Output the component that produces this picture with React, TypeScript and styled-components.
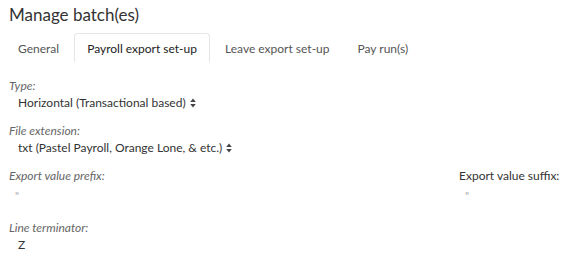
import React from 'react'
import styled, { createGlobalStyle } from 'styled-components'

const GlobalStyle = createGlobalStyle`
  html, body {
    margin: 0;
    padding: 0;
    background: #fff;
  }
  body {
    font-family: Lato, "Open Sans", sans-serif;
    color: #333;
  }
`

const Page = styled.div`
  width: 577px;
  height: 257px;
  padding: 4px 8px 0 9px;
  box-sizing: border-box;
  overflow: hidden;
`

const Title = styled.h1`
  margin: 0;
  font-size: 17px;
  font-weight: 400;
  line-height: 22px;
  color: #333;
`

const Tabs = styled.div`
  display: flex;
  margin: 7px 0 0 -4px;
  height: 29px;
`

const Tab = styled.div<{ $active?: boolean }>`
  padding: 0 12px;
  margin-right: 2px;
  font-size: 12px;
  line-height: 29px;
  color: ${(p) => (p.$active ? '#222' : '#555')};
  background: #fff;
  border: 1px solid ${(p) => (p.$active ? '#e6e6e6' : 'transparent')};
  border-bottom: none;
  border-radius: 4px 4px 0 0;
`

const Form = styled.div`
  padding-top: 16px;
`

const Row = styled.div`
  display: flex;
  justify-content: space-between;
`

const Field = styled.div<{ $w?: number }>`
  margin-bottom: 11px;
  width: ${(p) => (p.$w ? `${p.$w}px` : 'auto')};
`

const Label = styled.div<{ $plain?: boolean }>`
  font-size: 12px;
  line-height: 15px;
  font-style: ${(p) => (p.$plain ? 'normal' : 'italic')};
  color: ${(p) => (p.$plain ? '#333' : '#666')};
`

const Value = styled.div`
  font-size: 12px;
  line-height: 19px;
  padding-left: 9px;
  color: #333;
  display: flex;
  align-items: center;
  gap: 4px;
`

const Empty = styled.div`
  font-size: 11px;
  line-height: 26px;
  padding-left: 6px;
  color: #aaa;
`

const Sort = () => (
  <svg width="6" height="10" viewBox="0 0 6 10">
    <path d="M3 0.5 L5.8 4 H0.2 Z M3 9.5 L5.8 6 H0.2 Z" fill="#444" />
  </svg>
)

export default function App() {
  return (
    <>
      <GlobalStyle />
      <Page>
        <Title>Manage batch(es)</Title>
        <Tabs>
          <Tab>General</Tab>
          <Tab $active>Payroll export set-up</Tab>
          <Tab>Leave export set-up</Tab>
          <Tab>Pay run(s)</Tab>
        </Tabs>
        <Form>
          <Field>
            <Label>Type:</Label>
            <Value>
              Horizontal (Transactional based) <Sort />
            </Value>
          </Field>
          <Field>
            <Label>File extension:</Label>
            <Value>
              txt (Pastel Payroll, Orange Lone, &amp; etc.) <Sort />
            </Value>
          </Field>
          <Row>
            <Field>
              <Label>Export value prefix:</Label>
              <Empty>"</Empty>
            </Field>
            <Field $w={110}>
              <Label $plain>Export value suffix:</Label>
              <Empty>"</Empty>
            </Field>
          </Row>
          <Field>
            <Label>Line terminator:</Label>
            <Value>Z</Value>
          </Field>
        </Form>
      </Page>
    </>
  )
}
